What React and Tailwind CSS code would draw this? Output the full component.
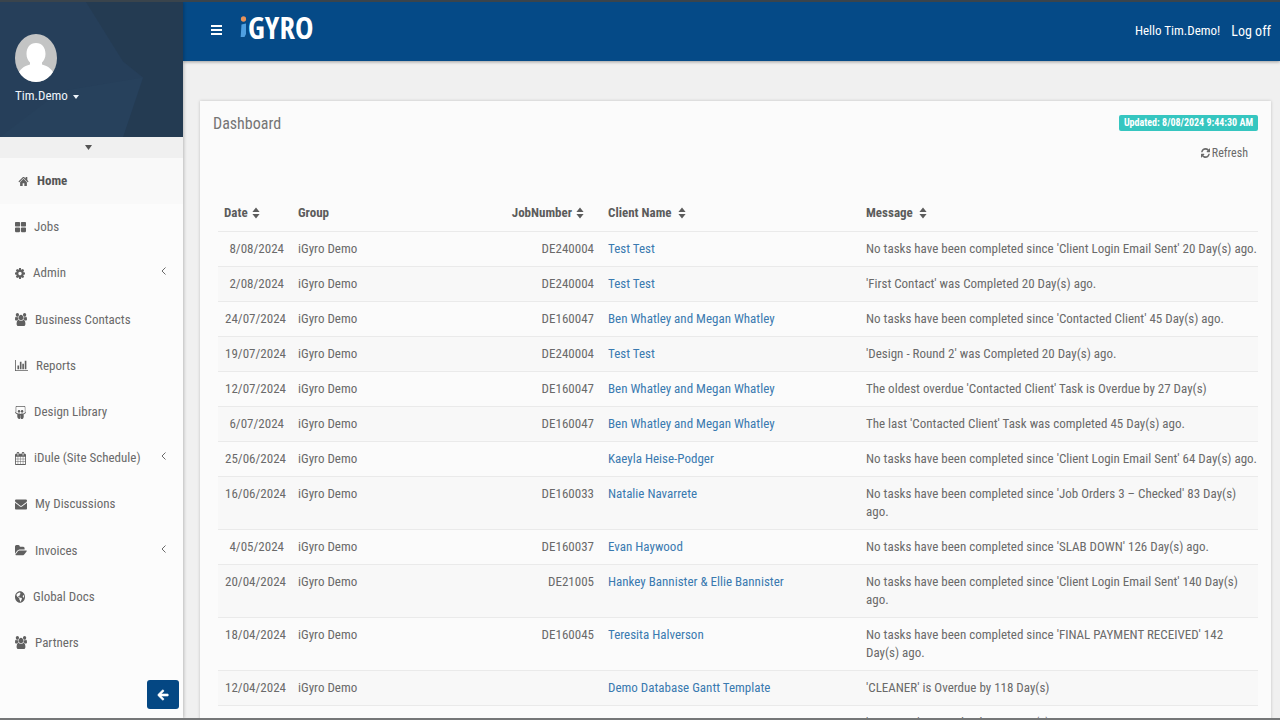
import React from "react";
import { FaGlobeAmericas, FaSlideshare, FaArrowLeft } from "react-icons/fa";

const ICONS = {
  home: {
    box: "64 128 1664 1536",
    d: "M1408 992v480q0 26-19 45t-45 19h-320v-384h-256v384h-320q-26 0-45-19t-19-45v-480q0-1 .5-3t.5-3l511-474 511 474q1 2 1 6zm223-69l-62 74q-8 9-21 11h-3q-13 0-21-7l-628-577-628 577q-12 8-24 7-13-2-21-11l-62-74q-8-10-7-23.5t11-21.5l655-599q32-26 76-26t76 26l244 204v-195q0-14 9-23t23-9h192q14 0 23 9t9 23v408l155 182q10 8 11 21.5t-7 23.5z",
  },
  grid: {
    box: "64 0 1664 1792",
    d: "M832 1024v384q0 52-38 90t-90 38h-512q-52 0-90-38t-38-90v-384q0-52 38-90t90-38h512q52 0 90 38t38 90zm0-768v384q0 52-38 90t-90 38h-512q-52 0-90-38t-38-90v-384q0-52 38-90t90-38h512q52 0 90 38t38 90zm896 768v384q0 52-38 90t-90 38h-512q-52 0-90-38t-38-90v-384q0-52 38-90t90-38h512q52 0 90 38t38 90zm0-768v384q0 52-38 90t-90 38h-512q-52 0-90-38t-38-90v-384q0-52 38-90t90-38h512q52 0 90 38t38 90z",
  },
  cog: {
    box: "128 0 1536 1792",
    d: "M1152 896q0-106-75-181t-181-75-181 75-75 181 75 181 181 75 181-75 75-181zm512-109v222q0 12-8 23t-20 13l-185 28q-19 54-39 91 35 50 107 138 10 12 10 25t-9 23q-27 37-99 108t-94 71q-12 0-26-9l-138-108q-44 23-91 38-16 136-29 186-7 28-36 28h-222q-14 0-24.5-8.5t-11.5-21.5l-28-184q-49-16-90-37l-141 107q-10 9-25 9-14 0-25-11-126-114-165-168-7-10-7-23 0-12 8-23 15-21 51-66.5t54-70.5q-27-50-41-99l-183-27q-13-2-21-12.5t-8-23.5v-222q0-12 8-23t19-13l186-28q14-46 39-92-40-57-107-138-10-12-10-24 0-10 9-23 26-36 98.5-107.5t94.5-71.5q13 0 26 10l138 107q44-23 91-38 16-136 29-186 7-28 36-28h222q14 0 24.5 8.5t11.5 21.5l28 184q49 16 90 37l142-107q9-9 24-9 13 0 25 10 129 119 165 170 7 8 7 22 0 12-8 23-15 21-51 66.5t-54 70.5q26 50 41 98l183 28q13 2 21 12.5t8 23.5z",
  },
  users: {
    box: "0 0 1920 1792",
    d: "M593 896q-162 5-265 128h-134q-82 0-138-40.5t-56-118.5q0-353 124-353 6 0 43.5 21t97.5 42.5 119 21.5q67 0 133-23-5 37-5 66 0 139 81 256zm1071 637q0 120-73 189.5t-194 69.5h-874q-121 0-194-69.5t-73-189.5q0-53 3.5-103.5t14-109 26.5-108.5 43-97.5 62-81 85.5-53.5 111.5-20q10 0 43 21.5t73 48 107 48 135 21.5 135-21.5 107-48 73-48 43-21.5q61 0 111.5 20t85.5 53.5 62 81 43 97.5 26.5 108.5 14 109 3.5 103.5zm-1024-1277q0 106-75 181t-181 75-181-75-75-181 75-181 181-75 181 75 75 181zm704 384q0 159-112.5 271.5t-271.5 112.5-271.5-112.5-112.5-271.5 112.5-271.5 271.5-112.5 271.5 112.5 112.5 271.5zm576 225q0 78-56 118.5t-138 40.5h-134q-103-123-265-128 81-117 81-256 0-29-5-66 66 23 133 23 59 0 119-21.5t97.5-42.5 43.5-21q124 0 124 353zm-128-609q0 106-75 181t-181 75-181-75-75-181 75-181 181-75 181 75 75 181z",
  },
  chart: {
    box: "0 0 2048 1792",
    d: "M640 896v512h-256v-512h256zm384-512v1024h-256v-1024h256zm1024 1152v128h-2048v-1536h128v1408h1920zm-640-896v768h-256v-768h256zm384-384v1152h-256v-1152h256z",
  },
  calendar: {
    box: "64 0 1664 1792",
    d: "M192 1664h288v-288h-288v288zm352 0h320v-288h-320v288zm-352-352h288v-320h-288v320zm352 0h320v-320h-320v320zm-352-384h288v-288h-288v288zm736 736h320v-288h-320v288zm-384-736h320v-288h-320v288zm768 736h288v-288h-288v288zm-384-352h320v-320h-320v320zm-352-864v-288q0-13-9.5-22.5t-22.5-9.5h-64q-13 0-22.5 9.5t-9.5 22.5v288q0 13 9.5 22.5t22.5 9.5h64q13 0 22.5-9.5t9.5-22.5zm736 864h288v-320h-288v320zm-384-384h320v-288h-320v288zm384 0h288v-288h-288v288zm32-480v-288q0-13-9.5-22.5t-22.5-9.5h-64q-13 0-22.5 9.5t-9.5 22.5v288q0 13 9.5 22.5t22.5 9.5h64q13 0 22.5-9.5t9.5-22.5zm384-64v1280q0 52-38 90t-90 38h-1408q-52 0-90-38t-38-90v-1280q0-52 38-90t90-38h128v-96q0-66 47-113t113-47h64q66 0 113 47t47 113v96h384v-96q0-66 47-113t113-47h64q66 0 113 47t47 113v96h128q52 0 90 38t38 90z",
  },
  envelope: {
    box: "0 64 1792 1792",
    d: "M1792 710v794q0 66-47 113t-113 47h-1472q-66 0-113-47t-47-113v-794q44 49 101 87 362 246 497 345 57 42 92.5 65.5t94.5 48 110 24.5h2q51 0 110-24.5t94.5-48 92.5-65.5q170-123 498-345 57-39 100-87zm0-294q0 79-49 151t-122 123q-376 261-468 325-10 7-42.5 31t-54 38.5-52 32.5-57.5 27-50 9h-2q-23 0-50-9t-57.5-27-52-32.5-54-38.5-42.5-31q-91-64-262-182.5t-205-142.5q-62-42-117-115.5t-55-136.5q0-78 41.5-130t118.5-52h1472q65 0 112.5 47t47.5 113z",
  },
  folder: {
    box: "0 0 1920 1792",
    d: "M1879 952q0 31-31 66l-336 396q-43 51-120.5 86.5t-143.5 35.5h-1088q-34 0-60.5-13t-26.5-43q0-31 31-66l336-396q43-51 120.5-86.5t143.5-35.5h1088q34 0 60.5 13t26.5 43zm-343-344v160h-832q-94 0-197 47.5t-164 119.5l-337 396-5 6q0-4-.5-12.5t-.5-12.5v-960q0-92 66-158t158-66h320q92 0 158 66t66 158v32h544q92 0 158 66t66 158z",
  },
  refresh: {
    box: "128 128 1536 1536",
    d: "M1639 1056q0 5-1 7-64 268-268 434.5t-478 166.5q-146 0-282.5-55t-243.5-157l-129 129q-19 19-45 19t-45-19-19-45v-448q0-26 19-45t45-19h448q26 0 45 19t19 45-19 45l-137 137q71 66 161 102t187 36q134 0 250-65t186-179q11-17 53-117 8-23 30-23h192q13 0 22.5 9.5t9.5 22.5zm25-800v448q0 26-19 45t-45 19h-448q-26 0-45-19t-19-45 19-45l138-138q-148-137-349-137-134 0-250 65t-186 179q-11 17-53 117-8 23-30 23h-199q-13 0-22.5-9.5t-9.5-22.5v-7q65-268 270-434.5t480-166.5q146 0 284 55.5t245 156.5l130-129q19-19 45-19t45 19 19 45z",
  },
};

function Icon({ name, className }) {
  const icon = ICONS[name];
  return (
    <svg viewBox={icon.box} preserveAspectRatio="none" fill="currentColor" aria-hidden="true" className={className}>
      <path d={icon.d} />
    </svg>
  );
}

const NAV = [
  { label: "Home", icon: <Icon name="home" className="h-[11px] w-[11px]" />, active: true },
  { label: "Jobs", icon: <Icon name="grid" className="h-[13px] w-[11px]" /> },
  { label: "Admin", icon: <Icon name="cog" className="h-[13px] w-[10px]" />, expandable: true },
  { label: "Business Contacts", icon: <Icon name="users" className="h-[13px] w-[12px]" /> },
  { label: "Reports", icon: <Icon name="chart" className="h-[13px] w-[13px]" /> },
  { label: "Design Library", icon: <FaSlideshare preserveAspectRatio="none" className="h-[13px] w-[11px]" /> },
  { label: "iDule (Site Schedule)", icon: <Icon name="calendar" className="h-[13px] w-[11px]" />, expandable: true },
  { label: "My Discussions", icon: <Icon name="envelope" className="h-[13px] w-[12px]" /> },
  { label: "Invoices", icon: <Icon name="folder" className="h-[13px] w-[12px]" />, expandable: true },
  { label: "Global Docs", icon: <FaGlobeAmericas preserveAspectRatio="none" className="h-[12px] w-[10px]" /> },
  { label: "Partners", icon: <Icon name="users" className="h-[13px] w-[12px]" /> },
];

const ROWS = [
  ["8/08/2024", "DE240004", "Test Test", "No tasks have been completed since 'Client Login Email Sent' 20 Day(s) ago."],
  ["2/08/2024", "DE240004", "Test Test", "'First Contact' was Completed 20 Day(s) ago."],
  ["24/07/2024", "DE160047", "Ben Whatley and Megan Whatley", "No tasks have been completed since 'Contacted Client' 45 Day(s) ago."],
  ["19/07/2024", "DE240004", "Test Test", "'Design - Round 2' was Completed 20 Day(s) ago."],
  ["12/07/2024", "DE160047", "Ben Whatley and Megan Whatley", "The oldest overdue 'Contacted Client' Task is Overdue by 27 Day(s)"],
  ["6/07/2024", "DE160047", "Ben Whatley and Megan Whatley", "The last 'Contacted Client' Task was completed 45 Day(s) ago."],
  ["25/06/2024", "", "Kaeyla Heise-Podger", "No tasks have been completed since 'Client Login Email Sent' 64 Day(s) ago."],
  ["16/06/2024", "DE160033", "Natalie Navarrete", "No tasks have been completed since 'Job Orders 3 – Checked' 83 Day(s) ago."],
  ["4/05/2024", "DE160037", "Evan Haywood", "No tasks have been completed since 'SLAB DOWN' 126 Day(s) ago."],
  ["20/04/2024", "DE21005", "Hankey Bannister & Ellie Bannister", "No tasks have been completed since 'Client Login Email Sent' 140 Day(s) ago."],
  ["18/04/2024", "DE160045", "Teresita Halverson", "No tasks have been completed since 'FINAL PAYMENT RECEIVED' 142 Day(s) ago."],
  ["12/04/2024", "", "Demo Database Gantt Template", "'CLEANER' is Overdue by 118 Day(s)"],
  ["12/04/2024", "DE160031", "Jac Martin", "'CLEANER' is Overdue by 118 Day(s)"],
];

function SortButton({ children, wide }) {
  return (
    <button type="button" className={wide ? "inline-flex items-center gap-[6px]" : "inline-flex items-center gap-1"}>
      {children}
      <svg viewBox="0 0 8 12" className="h-3 w-2" fill="currentColor" aria-hidden="true">
        <path d="M4 .5 7.600 5H.4zM.4 7h7.200L4 11.500z" />
      </svg>
    </button>
  );
}

function Sidebar() {
  return (
    <aside className="z-10 flex w-[183px] shrink-0 flex-col bg-[#fcfcfc] shadow-[1px_0_3px_rgba(0,0,0,0.22)]">
      <div className="relative h-[135px] shrink-0 bg-[#263f5a]">
        <svg viewBox="0 0 183 136" preserveAspectRatio="none" className="absolute inset-0 h-full w-full" aria-hidden="true">
          <path d="M86 0h97v136h-60l20-60-20-16z" fill="#243b52" />
          <path d="M0 136 60 90l83-14-20 60z" fill="#27415c" />
        </svg>
        <div className="relative flex flex-col items-start pl-[15px] pt-8">
          <svg viewBox="0 0 42 48" className="h-12 w-[42px]" role="img" aria-label="Profile picture">
            <defs>
              <clipPath id="face">
                <ellipse cx="21" cy="24" rx="21" ry="24" />
              </clipPath>
            </defs>
            <g clipPath="url(#face)">
              <path d="M0 0h42v48H0z" fill="#c3c4c4" />
              <path d="M21 9c6 0 9.500 4.500 9.500 11 0 4-1.700 6.500-3.500 8.500v2c6 1.500 11 5 13 12v8H2v-8c2-7 7-10.500 13-12v-2c-1.800-2-3.500-4.500-3.500-8.500C11.500 13.500 15 9 21 9z" fill="#fff" />
            </g>
          </svg>
          <button type="button" className="mt-[5px] flex items-center gap-[5px] text-[#eef4fa]">
            Tim.Demo
            <svg viewBox="0 0 6 4" className="mt-px h-1 w-1.5" fill="currentColor" aria-hidden="true">
              <path d="M0 0h6L3 4z" />
            </svg>
          </button>
        </div>
      </div>
      <button type="button" aria-label="Toggle profile panel" className="flex h-[21px] shrink-0 items-center bg-[#f0f0f0] pl-[85px] text-[#555]">
        <svg viewBox="0 0 7 5" className="h-[5px] w-[7px]" fill="currentColor" aria-hidden="true">
          <path d="M0 0h7L3.500 5z" />
        </svg>
      </button>
      <nav aria-label="Main">
        <ul className="flex h-[508px] flex-col">
          {NAV.map((item) => (
            <li key={item.label} className={item.active ? "flex-1 bg-[#f9f9f9] font-bold text-[#555]" : "flex-1 text-[#6a6a6a]"}>
              <a href="#" className={item.active ? "flex h-full items-center gap-2 pl-[18px] pr-[17px]" : "flex h-full items-center gap-2 pl-[15px] pr-[17px]"}>
                <span className="shrink-0 text-[#606060]">{item.icon}</span>
                <span className="grow whitespace-nowrap">{item.label}</span>
                {item.expandable && (
                  <svg viewBox="0 0 5 8" className="mb-1 h-2 w-[5px]" fill="none" stroke="currentColor" aria-hidden="true">
                    <path d="M4.500.5 1 4l3.500 3.500" />
                  </svg>
                )}
              </a>
            </li>
          ))}
        </ul>
      </nav>
      <div className="mt-auto flex justify-end pb-[9px] pr-1">
        <button type="button" aria-label="Collapse sidebar" className="flex h-[29px] w-8 items-center justify-center rounded-[3px] bg-[#044783] text-white">
          <FaArrowLeft className="h-3 w-3" stroke="currentColor" strokeWidth="30" />
        </button>
      </div>
    </aside>
  );
}

function Header() {
  return (
    <header className="z-[5] flex h-[59px] shrink-0 items-center bg-[#054a87] pb-[2px] pl-7 pr-[9px] text-white shadow-[0_1px_3px_rgba(0,0,0,0.35)]">
      <button type="button" aria-label="Toggle menu" className="pb-[2px]">
        <svg viewBox="0 0 11 10" className="h-[10px] w-[11px]" fill="currentColor" aria-hidden="true">
          <path d="M0 0h11v2H0zM0 4h11v2H0zM0 8h11v2H0z" />
        </svg>
      </button>
      <a href="#" aria-label="iGYRO" className="mb-2 ml-[18px] flex items-center gap-px">
        <svg viewBox="0 0 7 22" className="h-[22px] w-[7px]" aria-hidden="true">
          <ellipse cx="3.500" cy="3" rx="2.600" ry="2.800" fill="#e8935a" />
          <path d="M1.500 8.500 6 7.500v10.500L4.500 21H.7z" fill="#4f9fe0" />
        </svg>
        <span className="font-['Open_Sans_Condensed','Open_Sans',sans-serif] text-[31px] leading-8 font-extrabold">GYRO</span>
      </a>
      <div className="ml-auto flex items-center gap-[11px]">
        <span>Hello Tim.Demo!</span>
        <a href="#" className="text-[14px]">Log off</a>
      </div>
    </header>
  );
}

function JobTable() {
  return (
    <table className="w-full table-fixed border-collapse">
      <colgroup>
        <col className="w-[73px]" />
        <col className="w-[207px]" />
        <col className="w-[103px]" />
        <col className="w-[258px]" />
        <col />
      </colgroup>
      <thead>
        <tr className="h-9 text-left whitespace-nowrap text-[#5c5c5c]">
          <th scope="col" className="px-[6px]"><SortButton>Date</SortButton></th>
          <th scope="col" className="px-[7px]">Group</th>
          <th scope="col" className="pr-[17px] text-right"><SortButton>JobNumber</SortButton></th>
          <th scope="col" className="px-[7px]"><SortButton wide>Client Name</SortButton></th>
          <th scope="col" className="px-[7px]"><SortButton wide>Message</SortButton></th>
        </tr>
      </thead>
      <tbody>
        {ROWS.map(([date, job, client, message], i) => (
          <tr key={i} className="border-t border-[#eaeaea] align-top even:bg-[#f8f8f8]">
            <td className="px-[7px] py-2 text-right">{date}</td>
            <td className="px-[7px] py-2">iGyro Demo</td>
            <td className="px-[7px] py-2 text-right">{job}</td>
            <td className="px-[7px] py-2"><a href="#" className="text-[#3a7ab0]">{client}</a></td>
            <td className="py-2 pl-[7px]">{message}</td>
          </tr>
        ))}
      </tbody>
    </table>
  );
}

export default function App() {
  return (
    <div className="flex h-screen overflow-hidden border-t-2 border-b-2 border-t-[#3a444c] border-b-[#757778] bg-[#f0f0f0] font-['Roboto_Condensed',Roboto,'Liberation_Sans',sans-serif] text-[13px] leading-[18px] text-[#6a6a6a]">
      <Sidebar />
      <div className="flex min-w-0 grow flex-col">
        <Header />
        <main className="min-h-0 grow overflow-hidden pl-[17px] pr-[9px] pt-10">
          <section className="bg-[#fbfbfb] pb-5 shadow-[0_0_3px_rgba(0,0,0,0.2)]">
            <div className="flex items-start justify-between px-[13px] pt-[13px]">
              <h1 className="text-[16px] leading-5 text-[#757575]">Dashboard</h1>
              <div className="flex flex-col items-end gap-[13px]">
                <span className="mt-px rounded-[2px] bg-[#36c6c0] px-[5px] text-[10px] leading-4 font-bold text-white">
                  Updated: 8/08/2024 9:44:30 AM
                </span>
                <button type="button" className="mr-[10px] flex items-center gap-[2px] text-[12px] leading-[18px]">
                  <Icon name="refresh" className="h-[10px] w-[9px]" />
                  Refresh
                </button>
              </div>
            </div>
            <div className="pl-[18px] pr-[13px] pt-[33px]">
              <JobTable />
            </div>
          </section>
        </main>
      </div>
    </div>
  );
}
